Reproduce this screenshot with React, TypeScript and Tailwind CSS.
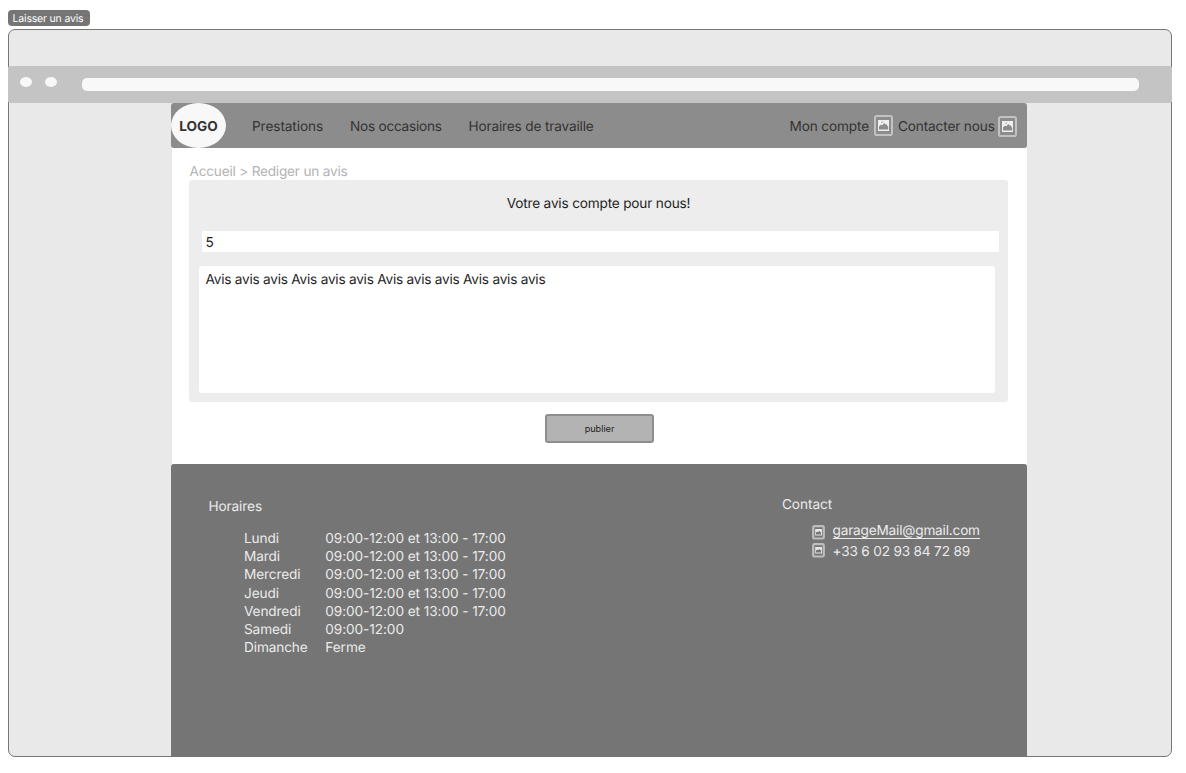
const FULL = "09:00-12:00 et 13:00 - 17:00";

const HOURS = [
  ["Lundi", FULL],
  ["Mardi", FULL],
  ["Mercredi", FULL],
  ["Jeudi", FULL],
  ["Vendredi", FULL],
  ["Samedi", "09:00-12:00"],
  ["Dimanche", "Ferme"],
];

function NavIcon({ className }: { className: string }) {
  return (
    <svg viewBox="0 0 19 21" className={`h-[21px] w-[19px] shrink-0 ${className}`}>
      <rect x="1" y="1" width="17" height="19" rx="1.8" fill="none" stroke="#c2c2c2" strokeWidth="2" />
      <rect x="4" y="5" width="11" height="11" fill="#efefef" />
      <path fill="#8c8c8c" d="M5 14.500v-3l1.900-1.700 1.400.5L10.300 8l1.200 1.600 1-.3 1.700 2.700v2.500z" />
      <rect x="7.500" y="6.500" width="1.300" height="1.300" fill="#a5a5a5" />
    </svg>
  );
}

function SmallIcon() {
  return (
    <svg viewBox="0 0 13 15" className="h-[15px] w-[13px] shrink-0">
      <rect x="1.200" y="1.200" width="10.600" height="12.300" rx="1.200" fill="none" stroke="#bdbdbd" strokeWidth="2.200" />
      <rect x="3.200" y="4" width="6.800" height="6.500" fill="#e6e6e6" />
      <path fill="#757575" d="M4 9.500V7.500l1.200-.8 1 .3L7.300 6l.9.800.9.700v2z" />
    </svg>
  );
}

function BrowserBar() {
  return (
    <div className="-mx-px mt-[36px] flex h-[37px] shrink-0 rounded-[2px] bg-[#c4c4c4]">
      <span className="ml-[12px] mt-[11px] h-[10px] w-[12px] rounded-[50%] bg-[#f8f8f8]" />
      <span className="ml-[13px] mt-[11px] h-[10px] w-[12px] rounded-[50%] bg-[#f8f8f8]" />
      <span className="ml-[25px] mt-[12px] h-[13px] w-[1057px] rounded-[5px] bg-[#f8f8f8]" />
    </div>
  );
}

function Header() {
  return (
    <header className="flex h-[45px] shrink-0 items-start rounded-[3px] bg-[#8c8c8c] leading-[20px] text-[#333]">
      <div className="flex h-[45px] w-[55px] items-center justify-center rounded-[50%] bg-[#f8f8f8] pt-[3px] font-bold">
        LOGO
      </div>
      <nav className="flex">
        <a className="ml-[26px] mt-[14px] w-[98px] tracking-[-0.09px]">Prestations</a>
        <a className="mt-[14px] w-[118.500px] tracking-[-0.25px]">Nos occasions</a>
        <a className="mt-[14px] whitespace-nowrap tracking-[-0.16px]">Horaires de travaille</a>
      </nav>
      <div className="ml-auto flex pr-[10px]">
        <a className="mt-[14px] whitespace-nowrap tracking-[-0.14px]">Mon compte</a>
        <NavIcon className="ml-[5px] mt-[12px]" />
        <a className="ml-[5px] mt-[14px] w-[97px] whitespace-nowrap tracking-[-0.15px]">Contacter nous</a>
        <NavIcon className="ml-[3px] mt-[13px]" />
      </div>
    </header>
  );
}

function ReviewForm() {
  return (
    <main className="ml-px flex h-[316px] shrink-0 flex-col bg-white pt-[14px]">
      <div className="ml-[17.500px] h-[18px] leading-[20px] tracking-[-0.21px] text-[#b3b3b3]">Accueil &gt; Rediger un avis</div>
      <section className="ml-[17px] flex h-[222px] w-[819px] shrink-0 flex-col rounded-[3px] bg-[#ededed] text-[#1f1f1f]">
        <h1 className="mt-[15px] text-center leading-[18px] tracking-[-0.18px]">Votre avis compte pour nous!</h1>
        <div className="ml-[13px] mt-[18px] h-[21px] w-[797px] rounded-[1px] bg-white pl-[3.500px] leading-[24px]">5</div>
        <div className="ml-[10px] mt-[14px] h-[127px] w-[796px] rounded-[3px] bg-white pl-[6.500px] pt-[5px] leading-[18px] tracking-[-0.23px]">
          Avis avis avis Avis avis avis Avis avis avis Avis avis avis
        </div>
      </section>
      <button className="ml-[373px] mt-[12px] h-[29px] w-[109px] rounded-[3px] border-2 border-[#8e8e8e] bg-[#b3b3b3] text-[9.100px] leading-[12px] text-[#1f1f1f]">
        publier
      </button>
    </main>
  );
}

function Footer() {
  return (
    <footer className="flex grow items-start justify-between rounded-t-[3px] bg-[#757575] text-[#ebebeb]">
      <div className="pl-[37.500px] pt-[34px]">
        <h2 className="leading-[18px] tracking-[-0.12px]">Horaires</h2>
        <dl className="ml-[35.500px] mt-[14px] tracking-[-0.07px]">
          {HOURS.map(([day, time]) => (
            <div key={day} className="flex h-[18.180px] leading-[18.180px]">
              <dt className="w-[81.300px] tracking-[-0.12px]">{day}</dt>
              <dd>{time}</dd>
            </div>
          ))}
        </dl>
      </div>
      <div className="w-[245px] pt-[32px]">
        <h2 className="leading-[18px] tracking-[-0.08px]">Contact</h2>
        <div className="ml-[30px] mt-[11px] flex">
          <SmallIcon />
          <a className="-mt-[3px] ml-[7.500px] h-[17px] border-b border-[#ebebeb] leading-[19px] tracking-[-0.19px]">
            garageMail@gmail.com
          </a>
        </div>
        <div className="ml-[30px] mt-[3px] flex h-[18px]">
          <SmallIcon />
          <span className="ml-[7.500px] leading-[18px] tracking-[-0.18px]">+33 6 02 93 84 72 89</span>
        </div>
      </div>
    </footer>
  );
}

export default function App() {
  return (
    <div className="flex h-[773px] w-[1186px] flex-col overflow-hidden bg-white pl-[8px] pt-[10px] font-['Inter',sans-serif] text-[13.640px] text-[#1f1f1f] [text-rendering:geometricPrecision]">
      <div className="flex h-[16px] w-[82px] shrink-0 items-center justify-center rounded-[4px] bg-[#757575] pt-px pr-[2px] text-[10.500px] leading-[14px] tracking-[-0.18px] text-white">
        Laisser un avis
      </div>
      <div className="mt-[3px] flex h-[728px] w-[1164px] shrink-0 flex-col rounded-[7px] border border-[#757575] bg-[#e9e9e9]">
        <BrowserBar />
        <div className="ml-[162px] flex w-[856px] grow flex-col">
          <Header />
          <ReviewForm />
          <Footer />
        </div>
      </div>
    </div>
  );
}
